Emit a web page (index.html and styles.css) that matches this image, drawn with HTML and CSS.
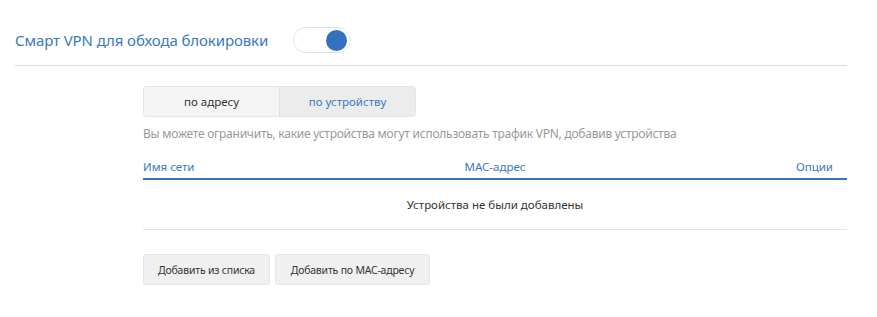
FILE: index.html
```html
<!DOCTYPE html>
<html lang="ru">
<head>
<meta charset="utf-8">
<link rel="stylesheet" href="styles.css">
</head>
<body>
<div class="page">
  <div class="header">
    <span class="title">Смарт VPN для обхода блокировки</span>
    <span class="toggle"><span class="knob"></span></span>
  </div>
  <div class="content">
    <div class="tabs">
      <div class="tab">по адресу</div>
      <div class="tab active">по устройству</div>
    </div>
    <p class="hint">Вы можете ограничить, какие устройства могут использовать трафик VPN, добавив устройства</p>
    <div class="table">
      <div class="thead">
        <span class="c1">Имя сети</span>
        <span class="c2">MAC-адрес</span>
        <span class="c3">Опции</span>
      </div>
      <div class="empty">Устройства не были добавлены</div>
    </div>
    <div class="buttons">
      <button class="btn btn-list">Добавить из списка</button>
      <button class="btn btn-mac">Добавить по MAC-адресу</button>
    </div>
  </div>
</div>
</body>
</html>
```

FILE: styles.css
```css
* { box-sizing: border-box; }
body {
  margin: 0;
  background: #fff;
  font-family: "Noto Sans", "Open Sans", sans-serif;
  color: #333;
}
.page {
  width: 847px;
  padding-left: 15px;
}
.header {
  display: flex;
  align-items: center;
  height: 66px;
  padding-top: 21px;
  padding-bottom: 6px;
  border-bottom: 1px solid #dcdcdc;
}
.title {
  font-size: 15px;
  letter-spacing: -0.1px;
  color: #3b78c3;
  width: 278px;
}
.toggle {
  display: flex;
  align-items: center;
  justify-content: flex-end;
  width: 58px;
  height: 26px;
  border: 1px solid #e2e2e2;
  border-radius: 13px;
  padding-right: 3px;
  background: #fff;
}
.knob {
  width: 21px;
  height: 21px;
  border-radius: 50%;
  background: #3371bf;
}
.content {
  margin-left: 128px;
  padding-top: 20px;
}
.tabs {
  display: flex;
  width: 273px;
  height: 31px;
  border: 1px solid #e6e6e6;
  border-radius: 3px;
  overflow: hidden;
}
.tab {
  flex: 1;
  display: flex;
  align-items: center;
  justify-content: center;
  font-size: 11.5px;
  color: #333;
  background: #f5f5f5;
}
.tab.active {
  background: #ececec;
  color: #3b78c3;
  border-left: 1px solid #e0e0e0;
}
.hint {
  margin: 0;
  padding-top: 8px;
  font-size: 12px;
  letter-spacing: -0.25px;
  color: #999;
  line-height: 18px;
}
.table {
  margin-top: 8px;
}
.thead {
  display: grid;
  grid-template-columns: 1fr 1fr 1fr;
  height: 29px;
  padding-top: 3px;
  align-items: center;
  border-bottom: 2px solid #3a72bd;
  font-size: 11.5px;
  color: #3b78c3;
  padding-right: 14px;
}
.c2 { text-align: center; padding-left: 14px; }
.c3 { text-align: right; }
.empty {
  height: 50px;
  display: flex;
  align-items: center;
  justify-content: center;
  border-bottom: 1px solid #e2e2e2;
  font-size: 11.5px;
  color: #333;
}
.buttons {
  display: flex;
  gap: 5px;
  margin-top: 24px;
}
.btn {
  font-family: inherit;
  font-size: 10.5px;
  letter-spacing: -0.2px;
  color: #333;
  height: 31px;
  padding: 0;
  background: #f0f0f0;
  border: 1px solid #e6e6e6;
  border-radius: 3px;
}
.btn-list { width: 127px; }
.btn-mac { width: 155px; }
```
